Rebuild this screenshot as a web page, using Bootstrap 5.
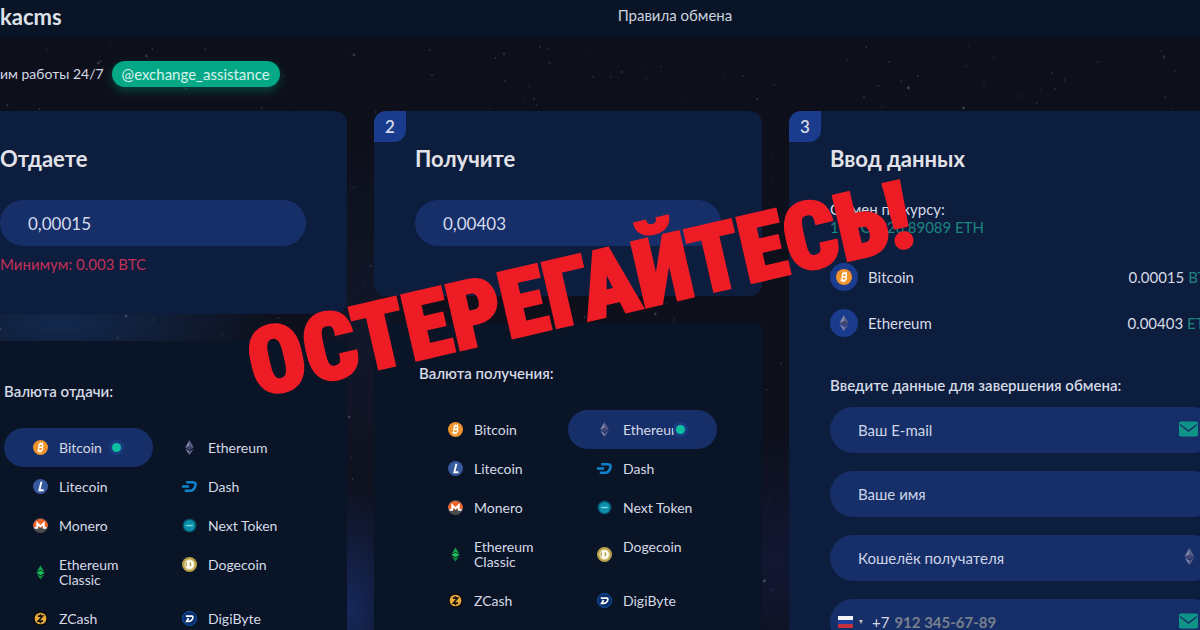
<!DOCTYPE html>
<html lang="ru">
<head>
<meta charset="utf-8">
<meta name="viewport" content="width=device-width, initial-scale=1">
<title>kacms</title>
<link rel="stylesheet" href="https://cdn.jsdelivr.net/npm/bootstrap@5.3.0/dist/css/bootstrap.min.css">
<style>
body{font-family:Lato,Inter,sans-serif;font-size:15px;line-height:18px;color:#d5dae6;background-color:#0d101c}
.page{height:100vh;overflow:hidden;
 background:
 radial-gradient(ellipse 220px 60px at 60px 325px,#13294f,transparent),
 radial-gradient(ellipse 70px 130px at 350px 610px,#16275a,transparent),
 radial-gradient(ellipse 60px 200px at 362px 340px,#12172a,transparent),
 radial-gradient(ellipse 90px 130px at 775px 560px,#121733,transparent),
 #0d101b}
.stars{z-index:0}
.page>header,.page>main{position:relative;z-index:1}
.topbar{height:38px;background:#091527}
.brand-name{font-size:22px;font-weight:700;line-height:34px;color:#dfe2ea;text-decoration:none}
.topbar a.rules{margin-left:556px;line-height:30px;color:#ccd2de;text-decoration:none}
.status{padding:23px 0 24px}
.status span{font-size:14px}
.assist{background:#04a886;color:#d6f3ec;line-height:26px;padding:0 10px;border-radius:13px;text-decoration:none;box-shadow:0 4px 10px #04a88655}
.steps{display:grid;grid-template-columns:388fr 388fr 468fr;column-gap:27px;margin:0 -57px 0 -41px;min-height:100%}
.panel{background:#0c1d3e;border-radius:12px;padding:35px 41px 0}
.panel h2{font-size:22px;font-weight:700;line-height:26px;margin-bottom:28px;color:#e2e2e8}
.step-no{top:0;left:0;width:32px;height:31px;line-height:32px;border-radius:12px 0 12px 0;background:#1b3b8c;font-size:17px;font-weight:600;text-align:center}
.form-control.pill{height:46px;border:0;border-radius:23px;background:#172f68;color:#d5dbee;padding:0 28px;font-size:15px;box-shadow:none}
.form-control.amount{font-size:17px}
.pill::placeholder{color:#cdd5e8;opacity:1}
.minimum{color:#c23058;margin-top:9px}
.amount-card{height:203px}
.amount-card.short{height:185px}
.list-panel{background:#0a1427;margin-top:27px;padding:41px 45px 0;flex:1}
h3{font-size:15px;font-weight:600;line-height:18px;margin:0}
.coins{display:grid;grid-template-columns:1fr 1fr;margin-top:28px}
.coins label{padding:12px 0 12px 29px;line-height:15px;font-size:14px;border-radius:20px;gap:11px;cursor:pointer}
.coins .btn-check:checked+label{background:#172f68}
.coins svg{width:15px;height:15px;flex:none}
.dot{right:29px;top:12px;width:15px;height:15px;border-radius:50%;background:#1a3c80;display:none}
.dot::after{content:"";position:absolute;inset:3px;border-radius:50%;background:#0fc0a0}
.btn-check:checked+label .dot{display:block}
.teal{color:#1d8580}
.rate{gap:10px;margin-top:27px}
.rate+.rate{margin-top:18px}
.coin-badge{width:28px;height:28px;border-radius:50%;background:#1b3b8c}
.coin-badge svg{width:16px;height:16px}
.fields-title{margin:39px 0 13px}
.fields{gap:18px}
.field-icon{right:17px;top:13px}
.phone{background:#172f68;border-radius:23px;height:46px;padding-left:8px}
.phone button{border:0;background:none;padding:0}
.phone input{border:0;background:none;outline:0;width:200px;font-weight:700;padding:0 0 0 5px}
.phone input::placeholder{color:#77808f;opacity:1}
.warning{z-index:5;left:0;right:0;top:290px;text-align:center;pointer-events:none}
.warning span{display:inline-block;transform:translate(-20px,-50%) rotate(-13deg);font-family:"Roboto Condensed","Roboto",sans-serif;font-weight:900;font-size:93px;line-height:93px;color:#ee1c25;white-space:nowrap;-webkit-text-stroke:3px #ee1c25}
</style>
</head>
<body>
<svg class="d-none">
 <symbol id="btc" viewBox="0 0 32 32"><circle cx="16" cy="16" r="16" fill="#f0932b"/><path d="M13.500 9l-2 14M12 9h6c4.500 0 4 6-.5 6.500h-5 5c5 .5 4 7-1 7H9M16 5.500v4M20 5.500v4M13 22.500v4M17 22.500v4" fill="none" stroke="#fff" stroke-width="2.800"/></symbol>
 <symbol id="eth" viewBox="0 0 32 32"><path d="M16 0L7 16l9 5z" fill="#8388ac"/><path d="M16 0l9 16-9 5z" fill="#5b618a"/><path d="M16 12l9 4-9 5-9-5z" fill="#3f4470"/><path d="M7 18.500l9 5.500v8z" fill="#8388ac"/><path d="M25 18.500L16 24v8z" fill="#5b618a"/></symbol>
 <symbol id="etc" viewBox="0 0 32 32"><path d="M16 1l8 13-8-3-8 3z" fill="#14a04a"/><path d="M16 12l9 4.500-9 5.500-9-5.500z" fill="#1fbf5c"/><path d="M8 19.500l8 4 8-4L16 31z" fill="#0f8a3e"/></symbol>
 <symbol id="ltc" viewBox="0 0 32 32"><circle cx="16" cy="16" r="16" fill="#365a9d"/><path d="M18 6l-4.500 18h9" fill="none" stroke="#fff" stroke-width="4"/></symbol>
 <symbol id="dash" viewBox="0 0 32 32"><path d="M9 7h13c8 0 8 3 6 9s-4 9-10 9H6M0 16h15" fill="none" stroke="#0f82cc" stroke-width="5.500"/></symbol>
 <symbol id="xmr" viewBox="0 0 32 32"><circle cx="16" cy="16" r="16" fill="#4d4d4d"/><path d="M0 18a16 16 0 1 1 32 0l-5 2H5z" fill="#f0642a"/><path d="M3 21h6V11l7 7 7-7v10h6" fill="none" stroke="#fff" stroke-width="4"/></symbol>
 <symbol id="nxt" viewBox="0 0 32 32"><circle cx="16" cy="16" r="15" fill="#084d66"/><circle cx="16" cy="16" r="12" fill="#0b8eaa"/><path d="M9 16h14" stroke="#7fd9e6" stroke-width="3"/></symbol>
 <symbol id="doge" viewBox="0 0 32 32"><circle cx="16" cy="16" r="16" fill="#baa24a"/><circle cx="16" cy="16" r="11" fill="#ece0b4"/><path d="M13 9h3c9 0 9 14 0 14h-3z" fill="none" stroke="#fff" stroke-width="3.500"/><path d="M9 12v7M18 12v7" stroke="#a8923e" stroke-width="2"/></symbol>
 <symbol id="zec" viewBox="0 0 32 32"><circle cx="16" cy="16" r="16" fill="#0b0b0e"/><circle cx="16" cy="16" r="12.500" fill="#e9ab3a"/><path d="M10.500 11h10l-9 10.500h10M16 7v4M16 21v5" fill="none" stroke="#15130e" stroke-width="3.500"/></symbol>
 <symbol id="dgb" viewBox="0 0 32 32"><circle cx="16" cy="16" r="15" fill="#082d6c" stroke="#1459ac" stroke-width="2"/><path d="M8 11h13c5 0 1 11-6 11h-5l4-7" fill="none" stroke="#fff" stroke-width="3.600"/></symbol>
 <symbol id="mail" viewBox="0 0 20 16"><rect y="1" width="19" height="15" rx="2" fill="#0f9488"/><path d="M1 4l8.500 6.500L18 4" fill="none" stroke="#172f68" stroke-width="1.500"/></symbol>
</svg>
<div class="page position-relative">
 <svg class="stars position-absolute top-0 start-0 w-100 h-100" aria-hidden="true"><g id="sky" fill="#8792ad"></g></svg>
 <header>
  <nav class="topbar d-flex align-items-start">
   <a class="brand-name" href="#">kacms</a>
   <a class="rules" href="#">Правила обмена</a>
  </nav>
  <div class="status d-flex align-items-center gap-2">
   <span>им работы 24/7</span>
   <a class="assist" href="#">@exchange_assistance</a>
  </div>
 </header>
 <main class="steps">
  <section class="d-flex flex-column">
   <div class="panel amount-card">
    <h2>Отдаете</h2>
    <input class="form-control pill amount" aria-label="Отдаете" value="0,00015">
    <div class="minimum">Минимум: 0.003 BTC</div>
   </div>
   <div class="list-panel">
    <h3>Валюта отдачи:</h3>
    <div class="coins" data-group="give" data-active="Bitcoin"></div>
   </div>
  </section>
  <section class="d-flex flex-column">
   <div class="panel amount-card short position-relative">
    <span class="step-no position-absolute">2</span>
    <h2>Получите</h2>
    <input class="form-control pill amount" aria-label="Получите" value="0,00403">
   </div>
   <div class="list-panel">
    <h3>Валюта получения:</h3>
    <div class="coins" data-group="get" data-active="Ethereum"></div>
   </div>
  </section>
  <section class="panel position-relative">
   <span class="step-no position-absolute">3</span>
   <h2>Ввод данных</h2>
   <div>Обмен по курсу:</div>
   <div class="teal">1 BTC = 26.89089 ETH</div>
   <div class="rate d-flex align-items-center">
    <span class="coin-badge d-flex align-items-center justify-content-center"><svg><use href="#btc"/></svg></span>
    <span>Bitcoin</span><span class="ms-auto">0.00015 <span class="teal">BTC</span></span>
   </div>
   <div class="rate d-flex align-items-center">
    <span class="coin-badge d-flex align-items-center justify-content-center"><svg><use href="#eth"/></svg></span>
    <span>Ethereum</span><span class="ms-auto">0.00403 <span class="teal">ETH</span></span>
   </div>
   <h3 class="fields-title">Введите данные для завершения обмена:</h3>
   <form class="fields d-flex flex-column">
    <div class="position-relative"><input type="email" class="form-control pill" aria-label="Ваш E-mail" placeholder="Ваш E-mail"><svg class="field-icon position-absolute" width="20" height="17"><use href="#mail"/></svg></div>
    <input class="form-control pill" aria-label="Ваше имя" placeholder="Ваше имя">
    <div class="position-relative"><input class="form-control pill" aria-label="Кошелёк получателя" placeholder="Кошелёк получателя"><svg class="field-icon position-absolute" width="19" height="17"><use href="#eth"/></svg></div>
    <div class="phone d-flex align-items-center position-relative">
     <button type="button" class="d-flex align-items-center" aria-label="Код страны"><svg width="26" height="12"><path d="M0 0h15v4H0z" fill="#f2f3f6"/><path d="M0 4h15v4H0z" fill="#1f3f9e"/><path d="M0 8h15v4H0z" fill="#c4303c"/><path d="M21 4h4l-2 4z" fill="#c9b9bb"/></svg></button>
     <label for="tel" class="ms-2">+7</label>
     <input id="tel" type="tel" placeholder="912 345-67-89">
     <svg class="field-icon position-absolute" width="20" height="17"><use href="#mail"/></svg>
    </div>
   </form>
  </section>
 </main>
 <div class="warning position-absolute"><span>ОСТЕРЕГАЙТЕСЬ!</span></div>
</div>
<script>
const coins=[["Bitcoin","btc"],["Ethereum","eth"],["Litecoin","ltc"],["Dash","dash"],["Monero","xmr"],["Next Token","nxt"],["Ethereum<br>Classic","etc"],["Dogecoin","doge"],["ZCash","zec"],["DigiByte","dgb"]];
document.querySelectorAll(".coins").forEach(box=>{
 const g=box.dataset.group;
 box.innerHTML=coins.map(([name,id])=>{
  const center=id==="etc"||(id==="doge"&&g==="get");
  return `<div class="d-flex"><input class="btn-check" type="radio" name="${g}" id="${g}-${id}"${name===box.dataset.active?" checked":""}><label class="d-flex w-100 position-relative" for="${g}-${id}"><svg class="${center?"align-self-center":""}"><use href="#${id}"/></svg><span>${name}</span><i class="dot position-absolute"></i></label></div>`;
 }).join("");
});
let seed=7;const rnd=()=>(seed=seed*16807%2147483647)/2147483647;
let s="";for(let i=0;i<700;i++)s+=`<circle cx="${(rnd()*100).toFixed(1)}%" cy="${Math.round(rnd()*630)}" r="${rnd()<.12?1.4:.8}" opacity="${(.1+rnd()*.35).toFixed(2)}"/>`;
document.getElementById("sky").innerHTML=s;
</script>
<script src="https://cdn.jsdelivr.net/npm/bootstrap@5.3.0/dist/js/bootstrap.bundle.min.js"></script>
</body>
</html>
